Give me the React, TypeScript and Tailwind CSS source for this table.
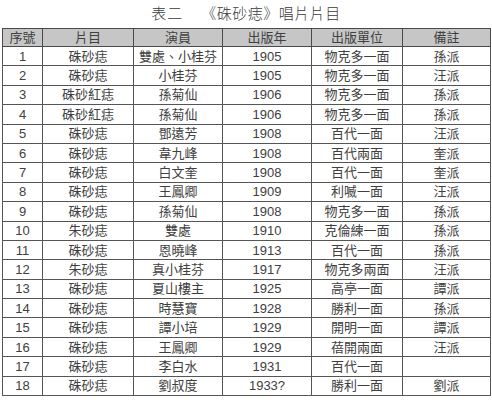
import React from "react"

const rows = [
  ["1", "硃砂痣", "雙處、小桂芬", "1905", "物克多一面", "孫派"],
  ["2", "硃砂痣", "小桂芬", "1905", "物克多一面", "汪派"],
  ["3", "硃砂紅痣", "孫菊仙", "1906", "物克多一面", "孫派"],
  ["4", "硃砂紅痣", "孫菊仙", "1906", "物克多一面", "孫派"],
  ["5", "硃砂痣", "鄧遠芳", "1908", "百代一面", "汪派"],
  ["6", "硃砂痣", "韋九峰", "1908", "百代兩面", "奎派"],
  ["7", "硃砂痣", "白文奎", "1908", "百代一面", "奎派"],
  ["8", "硃砂痣", "王鳳卿", "1909", "利喴一面", "汪派"],
  ["9", "硃砂痣", "孫菊仙", "1908", "物克多一面", "孫派"],
  ["10", "朱砂痣", "雙處", "1910", "克倫練一面", "孫派"],
  ["11", "硃砂痣", "恩曉峰", "1913", "百代一面", "孫派"],
  ["12", "朱砂痣", "真小桂芬", "1917", "物克多兩面", "汪派"],
  ["13", "硃砂痣", "夏山樓主", "1925", "高亭一面", "譚派"],
  ["14", "硃砂痣", "時慧寶", "1928", "勝利一面", "孫派"],
  ["15", "硃砂痣", "譚小培", "1929", "開明一面", "譚派"],
  ["16", "硃砂痣", "王鳳卿", "1929", "蓓開兩面", "汪派"],
  ["17", "硃砂痣", "李白水", "1931", "百代一面", ""],
  ["18", "硃砂痣", "劉叔度", "1933?", "勝利一面", "劉派"],
]

const headers = ["序號", "片目", "演員", "出版年", "出版單位", "備註"]
const widths = ["w-[40px]", "w-[91px]", "w-[89px]", "w-[89px]", "w-[91px]", "w-[88px]"]

export default function App() {
  return (
    <div
      className="w-[492px] h-[403px] bg-white text-[#404040] overflow-hidden"
      style={{ fontFamily: '"Liberation Sans", "Noto Sans CJK TC", sans-serif' }}
    >
      <h1 className="pt-[4px] h-[28px] flex justify-center gap-[18px] text-[15px] leading-[20px] font-light text-[#3a3a3a]">
        <span className="tracking-[1px]">表二</span>
        <span className="tracking-[0.5px]">《硃砂痣》唱片片目</span>
      </h1>

      <table className="ml-[2px] border-collapse table-fixed text-[13px]">
        <thead>
          <tr className="bg-[#c6c6c6] h-[18px]">
            {headers.map((h, i) => (
              <th
                key={h}
                className={`${widths[i]} border border-[#4a4a4a] font-normal leading-[16px] p-0 text-center`}
              >
                {h}
              </th>
            ))}
          </tr>
        </thead>
        <tbody>
          {rows.map((r) => (
            <tr key={r[0]} className="h-[19.4px]">
              {r.map((c, i) => (
                <td
                  key={i}
                  className="border border-[#555] leading-[17px] p-0 text-center"
                >
                  {c}
                </td>
              ))}
            </tr>
          ))}
        </tbody>
      </table>
    </div>
  )
}
